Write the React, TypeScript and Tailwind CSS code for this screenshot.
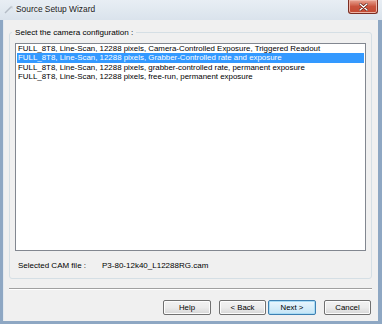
import { useState } from 'react';

const configs = [
  'FULL_8T8, Line-Scan, 12288 pixels, Camera-Controlled Exposure, Triggered Readout',
  'FULL_8T8, Line-Scan, 12288 pixels, Grabber-Controlled rate and exposure',
  'FULL_8T8, Line-Scan, 12288 pixels, grabber-controlled rate, permanent exposure',
  'FULL_8T8, Line-Scan, 12288 pixels, free-run, permanent exposure',
];

const font = { fontFamily: '"Liberation Sans", Arial, sans-serif' };

function WizardButton({ label, primary, width }: { label: string; primary?: boolean; width: string }) {
  return (
    <button
      className={
        primary
          ? `${width} h-[15px] rounded-[2px] border border-[#3c7fb1] bg-gradient-to-b from-[#eaf6fd] to-[#c4e5f6] text-[7.8px] text-black shadow-[inset_0_0_0_1px_#a9dcf5]`
          : `${width} h-[15px] rounded-[2px] border border-[#707070] bg-gradient-to-b from-[#f2f2f2] via-[#ebebeb] to-[#d6d6d6] text-[7.8px] text-black shadow-[inset_0_0_0_1px_#fcfcfc]`
      }
    >
      {label}
    </button>
  );
}

export default function App() {
  const [selected, setSelected] = useState(1);

  return (
    <div className="w-[382px] h-[324px] flex flex-col bg-[#dfe7ef] overflow-hidden" style={font}>
      {/* title bar */}
      <div className="h-[20px] flex items-start bg-gradient-to-b from-[#e8eef4] to-[#dae3ec]">
        <div className="w-[16px] h-[19px] flex items-center justify-center pl-[2px]">
          <svg width="10" height="9" viewBox="0 0 10 9">
            <line x1="1" y1="8" x2="7" y2="2" stroke="#b4bcc6" strokeWidth="1.4" />
            <path d="M7.5 0.5 L8 1.6 L9.3 1.8 L8.3 2.6 L8.6 3.8 L7.5 3.1 L6.5 3.8 L6.8 2.6 L5.8 1.8 L7.1 1.6 Z" fill="#c5ccd4" />
          </svg>
        </div>
        <span className="h-[19px] leading-[19px] text-[8.4px] text-[#1b1b1b] flex-1 [text-shadow:0_0_4px_#ffffff]">
          Source Setup Wizard
        </span>
        <div className="w-[30px] h-[14px] mr-[4px] rounded-b-[3px] border border-t-0 border-[#7b2d22] bg-gradient-to-b from-[#e8a493] via-[#c9533d] to-[#c34a33] flex items-center justify-center shadow-[inset_0_0_0_1px_#eeb4a6]">
          <svg width="9" height="8" viewBox="0 0 9 8">
            <path d="M1 1 L8 7 M8 1 L1 7" stroke="#5a1a10" strokeWidth="2.6" strokeLinecap="round" />
            <path d="M1 1 L8 7 M8 1 L1 7" stroke="#ffffff" strokeWidth="1.4" strokeLinecap="round" />
          </svg>
        </div>
      </div>

      {/* window body with glass frame on the sides */}
      <div className="flex-1 flex border-l-[3px] border-r-[4px] border-b-[3px] border-[#8ea7c3]">
        <div className="flex-1 flex flex-col bg-[#f0f0f0] border-l border-[#e3e9ef]">
          {/* group box */}
          <div className="relative mt-[12px] ml-[5px] mr-[6px] h-[247px] border border-[#d5dfe5] rounded-[3px] flex flex-col">
            <span className="absolute left-[2px] top-[-6px] px-[3px] bg-[#f0f0f0] text-[8.1px] leading-[11px] text-black">
              Select the camera configuration :
            </span>

            <div className="mt-[10px] mx-[5px] h-[208px] border border-[#828790] bg-white">
              {configs.map((c, i) => (
                <div
                  key={c}
                  onClick={() => setSelected(i)}
                  className={
                    i === selected
                      ? 'mx-[1px] h-[9.33px] leading-[9.33px] pl-[1px] text-[7.9px] whitespace-nowrap bg-[#3399ff] text-white'
                      : 'mx-[1px] h-[9.33px] leading-[9.33px] pl-[1px] text-[7.9px] whitespace-nowrap text-black'
                  }
                >
                  {c}
                </div>
              ))}
            </div>

            <div className="mt-[9px] ml-[8px] flex text-[8px] leading-[11px] text-black">
              <span className="w-[84px]">Selected CAM file :</span>
              <span>P3-80-12k40_L12288RG.cam</span>
            </div>
          </div>

          {/* separator */}
          <div className="mt-[9px] ml-[5px] mr-[6px] h-[2px] border-t border-[#a0a0a0] border-b border-b-white" />

          {/* buttons */}
          <div className="mt-[10px] flex justify-end pr-[7px]">
            <WizardButton label="Help" width="w-[48px]" />
            <div className="w-[8px]" />
            <WizardButton label="< Back" width="w-[47px]" />
            <div className="w-[2px]" />
            <WizardButton label="Next >" width="w-[48px]" primary />
            <div className="w-[8px]" />
            <WizardButton label="Cancel" width="w-[47px]" />
          </div>
        </div>
      </div>
    </div>
  );
}
